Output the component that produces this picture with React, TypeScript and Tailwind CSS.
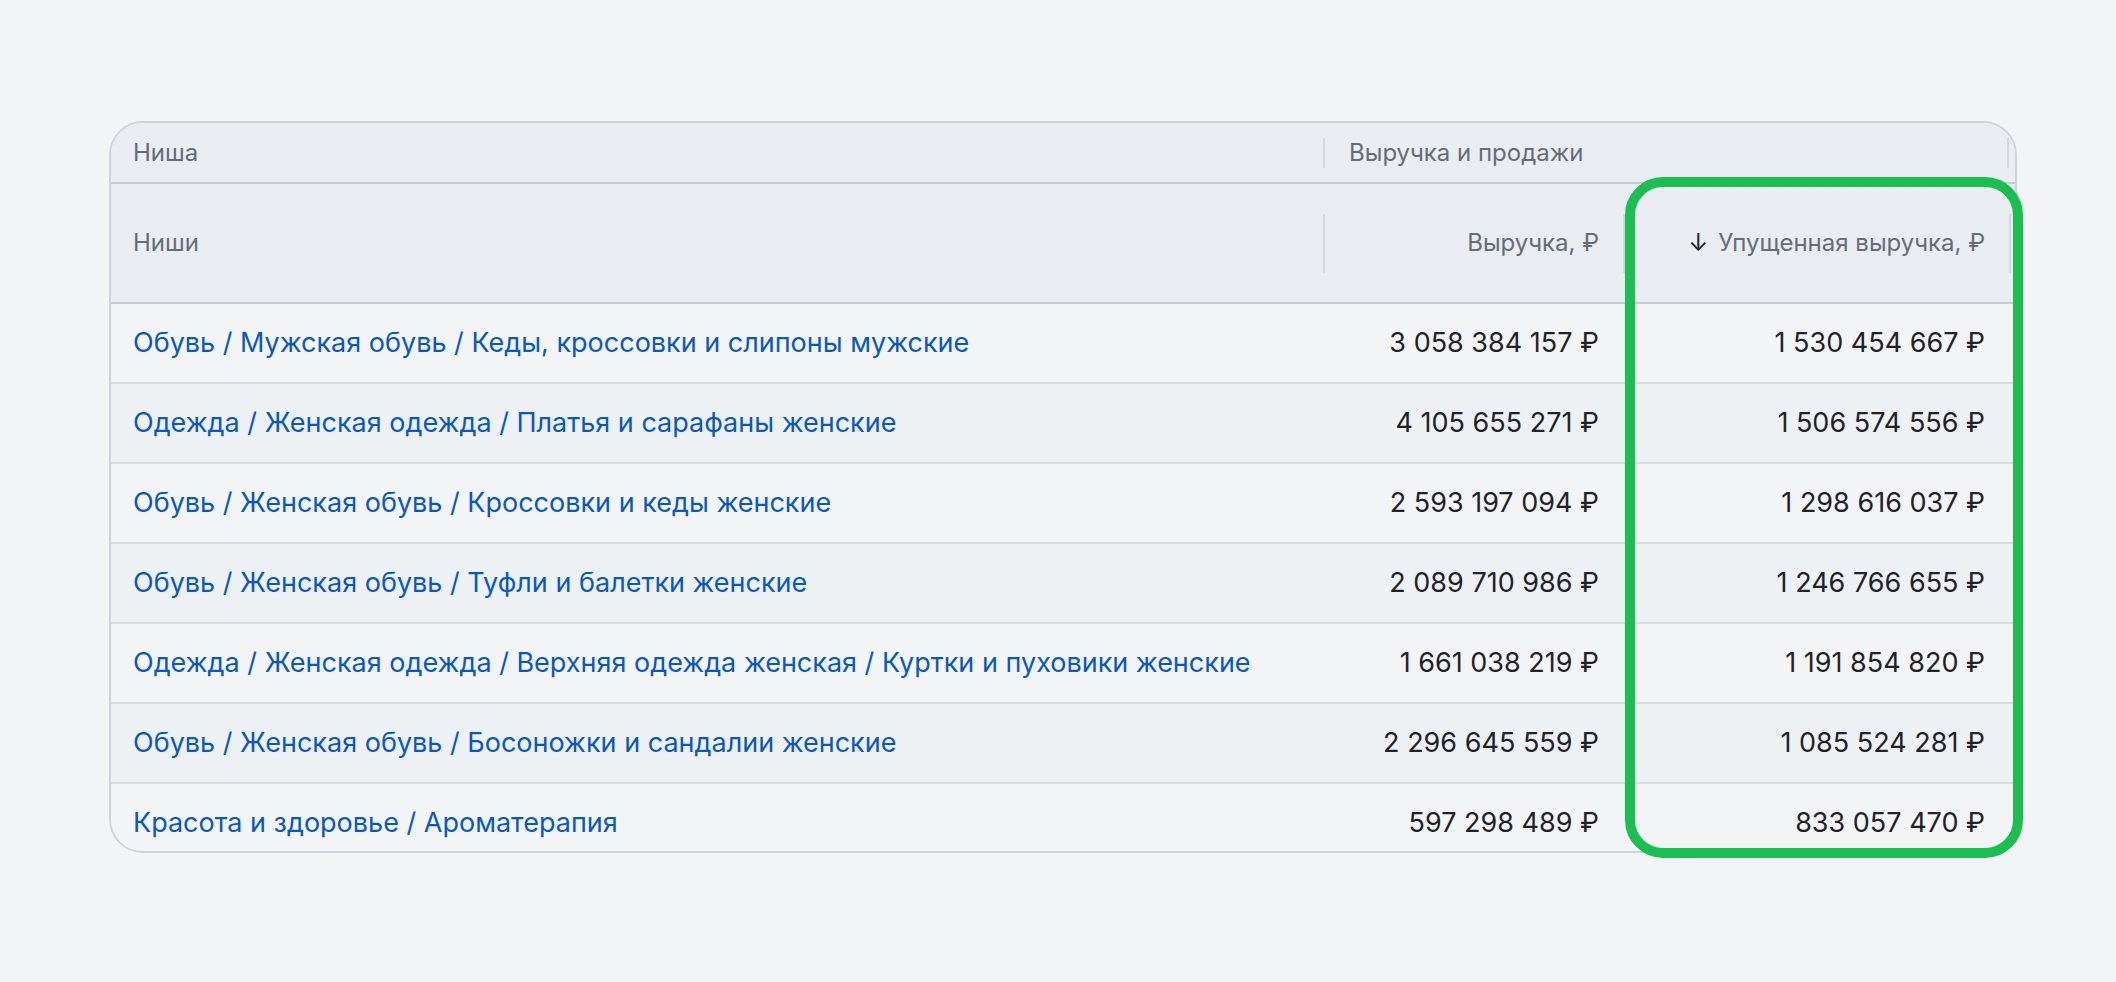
import React from "react";

const rows: [string, string, string][] = [
  ["Обувь / Мужская обувь / Кеды, кроссовки и слипоны мужские", "3 058 384 157 ₽", "1 530 454 667 ₽"],
  ["Одежда / Женская одежда / Платья и сарафаны женские", "4 105 655 271 ₽", "1 506 574 556 ₽"],
  ["Обувь / Женская обувь / Кроссовки и кеды женские", "2 593 197 094 ₽", "1 298 616 037 ₽"],
  ["Обувь / Женская обувь / Туфли и балетки женские", "2 089 710 986 ₽", "1 246 766 655 ₽"],
  ["Одежда / Женская одежда / Верхняя одежда женская / Куртки и пуховики женские", "1 661 038 219 ₽", "1 191 854 820 ₽"],
  ["Обувь / Женская обувь / Босоножки и сандалии женские", "2 296 645 559 ₽", "1 085 524 281 ₽"],
  ["Красота и здоровье / Ароматерапия", "597 298 489 ₽", "833 057 470 ₽"],
];

const Divider = ({ h }: { h: string }) => <div className={`w-[2px] shrink-0 bg-[#d3d8de] ${h}`} />;

export default function App() {
  return (
    <div
      className="min-h-screen w-full bg-[#f3f4f6] pl-[109px] pt-[121px]"
      style={{ fontFamily: 'Inter, "Noto Sans", sans-serif' }}
    >
      <div className="relative w-[1908px]">
        <div className="h-[732px] overflow-hidden rounded-[34px] border-2 border-[#ccd3da] bg-[#f3f4f6]">
          {/* header row 1 */}
          <div className="flex h-[61px] border-b-2 border-[#c5ccd4] bg-[#e9edf1] text-[24px] text-[#646c78]">
            <div className="flex w-[1212px] items-center pl-[22px]">Ниша</div>
            <div className="flex flex-1 items-center">
              <Divider h="h-[30px]" />
              <div className="flex-1 pl-6">Выручка и продажи</div>
              <Divider h="h-[30px]" />
              <div className="w-[6px]" />
            </div>
          </div>
          {/* header row 2 */}
          <div className="flex h-[120px] border-b-2 border-[#c5ccd4] bg-[#e9edf1] text-[24px] text-[#646c78]">
            <div className="flex w-[1212px] items-center pl-[22px]">Ниши</div>
            <div className="flex w-[300px] items-center">
              <Divider h="h-[59px]" />
              <div className="flex-1 pr-6 text-right">Выручка, ₽</div>
            </div>
            <div className="flex w-[386px] items-center">
              <Divider h="h-[59px]" />
              <div className="flex flex-1 items-center justify-end gap-[10px] pr-6">
                <span className="text-[#1f2329]">↓</span>
                <span>Упущенная выручка, ₽</span>
              </div>
            </div>
            <div className="flex flex-1 items-center">
              <Divider h="h-[59px]" />
            </div>
          </div>
          {rows.map((r, i) => (
            <div
              key={i}
              className={`flex h-[80px] border-b-2 border-[#d7dbe0] text-[27px] ${
                i % 2 === 1 ? "bg-[#eef1f4]" : "bg-[#f3f4f6]"
              }`}
            >
              <div className="flex w-[1212px] items-center pl-[22px] text-[#0a58c0]">{r[0]}</div>
              <div className="flex w-[300px] items-center justify-end pr-6 text-[#1f2329]">{r[1]}</div>
              <div className="flex w-[386px] items-center justify-end pr-6 text-[#1f2329]">{r[2]}</div>
              <div className="flex-1" />
            </div>
          ))}
        </div>
        <div className="pointer-events-none absolute left-[1516px] top-[56px] h-[681px] w-[398px] rounded-[38px] border-[10px] border-[#1bbf51]" />
      </div>
    </div>
  );
}
